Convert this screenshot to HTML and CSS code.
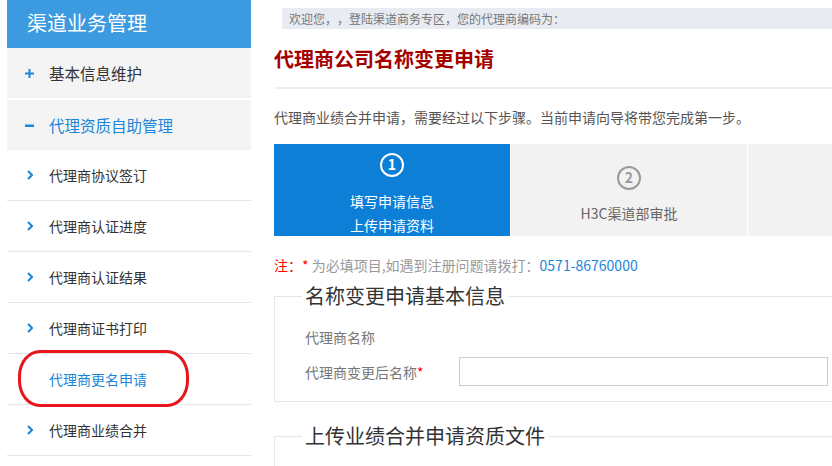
FILE: index.html
```html
<!DOCTYPE html>
<html lang="zh-CN">
<head>
    <meta charset="UTF-8">
    <title>代理商公司名称变更申请</title>
    <link rel="stylesheet" href="styles.css">
</head>
<body>
    <div class="layout">
        <div class="sidebar">
            <div class="side-title">渠道业务管理</div>
            <div class="group group-first">
                <svg class="group-icon" width="9" height="9" viewBox="0 0 9 9"><rect x="0" y="3.5" width="9" height="2" fill="#1a86d8"/><rect x="3.5" y="0" width="2" height="9" fill="#1a86d8"/></svg>
                <span>基本信息维护</span>
            </div>
            <div class="group active">
                <svg class="group-icon" width="9" height="9" viewBox="0 0 9 9"><rect x="0" y="3.5" width="9" height="2.5" fill="#1a86d8"/></svg>
                <span>代理资质自助管理</span>
            </div>
            <ul class="sub-menu">
                <li><svg class="chev" width="6" height="10" viewBox="0 0 6 10"><polyline points="1,1 5,5 1,9" fill="none" stroke="#1a86d8" stroke-width="2"/></svg>代理商协议签订</li>
                <li><svg class="chev" width="6" height="10" viewBox="0 0 6 10"><polyline points="1,1 5,5 1,9" fill="none" stroke="#1a86d8" stroke-width="2"/></svg>代理商认证进度</li>
                <li><svg class="chev" width="6" height="10" viewBox="0 0 6 10"><polyline points="1,1 5,5 1,9" fill="none" stroke="#1a86d8" stroke-width="2"/></svg>代理商认证结果</li>
                <li><svg class="chev" width="6" height="10" viewBox="0 0 6 10"><polyline points="1,1 5,5 1,9" fill="none" stroke="#1a86d8" stroke-width="2"/></svg>代理商证书打印</li>
                <li class="current"><span class="chev-space"></span>代理商更名申请</li>
                <li><svg class="chev" width="6" height="10" viewBox="0 0 6 10"><polyline points="1,1 5,5 1,9" fill="none" stroke="#1a86d8" stroke-width="2"/></svg>代理商业绩合并</li>
            </ul>
            <!-- hand-drawn red mark on the screenshot -->
            <div class="mark"></div>
        </div>

        <div class="main">
            <div class="welcome">欢迎您，，登陆渠道商务专区，您的代理商编码为：</div>
            <h1 class="page-title">代理商公司名称变更申请</h1>
            <div class="divider"></div>
            <p class="intro">代理商业绩合并申请，需要经过以下步骤。当前申请向导将带您完成第一步。</p>

            <div class="steps">
                <div class="step step-current">
                    <span class="step-num">1</span>
                    <div class="step-text">填写申请信息<br>上传申请资料</div>
                </div>
                <div class="step step-next">
                    <span class="step-num">2</span>
                    <div class="step-text">H3C渠道部审批</div>
                </div>
                <div class="step"></div>
            </div>

            <p class="note"><span class="red">注：*</span> 为必填项目,如遇到注册问题请拨打：<span class="phone">0571-86760000</span></p>

            <fieldset class="box">
                <legend>名称变更申请基本信息</legend>
                <div class="field-row field-row-first">
                    <label class="field-label">代理商名称</label>
                </div>
                <div class="field-row">
                    <label class="field-label">代理商变更后名称<span class="req">*</span></label>
                    <input type="text" class="field-input">
                </div>
            </fieldset>

            <fieldset class="box box-upload">
                <legend>上传业绩合并申请资质文件</legend>
            </fieldset>
        </div>
    </div>
</body>
</html>
```

FILE: styles.css
```css
html, body {
    margin: 0;
    padding: 0;
    overflow: hidden;
    background: #fff;
}
body {
    font-family: "Noto Sans CJK SC", "Microsoft YaHei", "Noto Sans", sans-serif;
    font-size: 14px;
    color: #333;
    text-spacing-trim: space-all;
}
.layout {
    display: flex;
    align-items: flex-start;
}

/* sidebar */
.sidebar {
    position: relative;
    flex: 0 0 244px;
    margin-left: 7px;
}
.side-title {
    height: 48px;
    line-height: 46px;
    padding-left: 20px;
    background: #3c9ae0;
    color: #fff;
    font-size: 20px;
}
.group {
    display: flex;
    align-items: center;
    height: 50px;
    margin-top: 2px;
    padding-left: 18px;
    background: #f4f4f4;
    font-size: 15.5px;
    color: #333;
}
.group-first {
    margin-top: 0;
}
.group-icon {
    margin-right: 15px;
}
.group.active {
    color: #1a86d8;
}
.sub-menu {
    list-style: none;
    margin: 0;
    padding: 0;
}
.sub-menu li {
    display: flex;
    align-items: center;
    height: 50px;
    padding-left: 20px;
    border-bottom: 1px solid #e6e6e6;
    font-size: 14px;
    color: #333;
}
.chev, .chev-space {
    display: inline-block;
    width: 6px;
    margin-right: 16px;
}
.sub-menu li.current {
    color: #1a86d8;
}
.mark {
    position: absolute;
    left: 11px;
    top: 350px;
    width: 165px;
    height: 51px;
    border: 3px solid #e8141c;
    border-radius: 22px / 26px;
}

/* main content */
.main {
    flex: 0 0 720px;
    margin-left: 23px;
}
.welcome {
    margin: 8px 0 0 8px;
    height: 21px;
    line-height: 21px;
    padding-left: 7px;
    background: #e8ecf2;
    color: #777;
    font-size: 12px;
}
.page-title {
    margin: 15px 0 0;
    line-height: 30px;
    font-size: 20px;
    font-weight: bold;
    color: #a30000;
}
.divider {
    margin-top: 13px;
    height: 2px;
    background: #eee;
}
.intro {
    margin: 18px 0 0;
    line-height: 20px;
    color: #555;
}
.steps {
    display: flex;
    gap: 1px;
    margin-top: 17px;
}
.step {
    flex: 0 0 236px;
    height: 92px;
    background: #f2f2f2;
    text-align: center;
}
.step-num {
    display: inline-block;
    box-sizing: border-box;
    width: 24px;
    height: 24px;
    line-height: 19px;
    border: 2.5px solid #999;
    border-radius: 50%;
    font-size: 14px;
    font-weight: bold;
    color: #999;
}
.step-text {
    margin-top: 12px;
    line-height: 24px;
    font-size: 14px;
}
.step-current {
    background: #0e7fd7;
    color: #fff;
    padding-top: 9px;
    height: 83px;
}
.step-current .step-num {
    border-color: #fff;
    color: #fff;
}
.step-next {
    padding-top: 22px;
    height: 70px;
    color: #666;
}
.step-next .step-text {
    margin-top: 11px;
}
.note {
    margin: 19px 0 0;
    line-height: 20px;
    color: #999;
}
.red {
    color: #f00;
}
.phone {
    color: #1a86d8;
}

/* form boxes */
.box {
    margin: 9px 0 0;
    padding: 19px 30px 15px;
    border: 1px solid #e6e6e6;
}
.box legend {
    padding: 0 3px;
    margin-left: -3px;
    line-height: 24px;
    font-size: 20px;
    color: #333;
}
.field-row {
    display: flex;
    align-items: center;
    margin-top: 10px;
}
.field-row-first {
    margin-top: 0;
    line-height: 20px;
}
.field-label {
    width: 154px;
    color: #777;
}
.req {
    color: #f00;
}
.field-input {
    box-sizing: border-box;
    width: 369px;
    height: 29px;
    margin: 0;
    border: 1px solid #ccc;
}
.box-upload {
    margin-top: 22px;
    min-height: 80px;
}
```
